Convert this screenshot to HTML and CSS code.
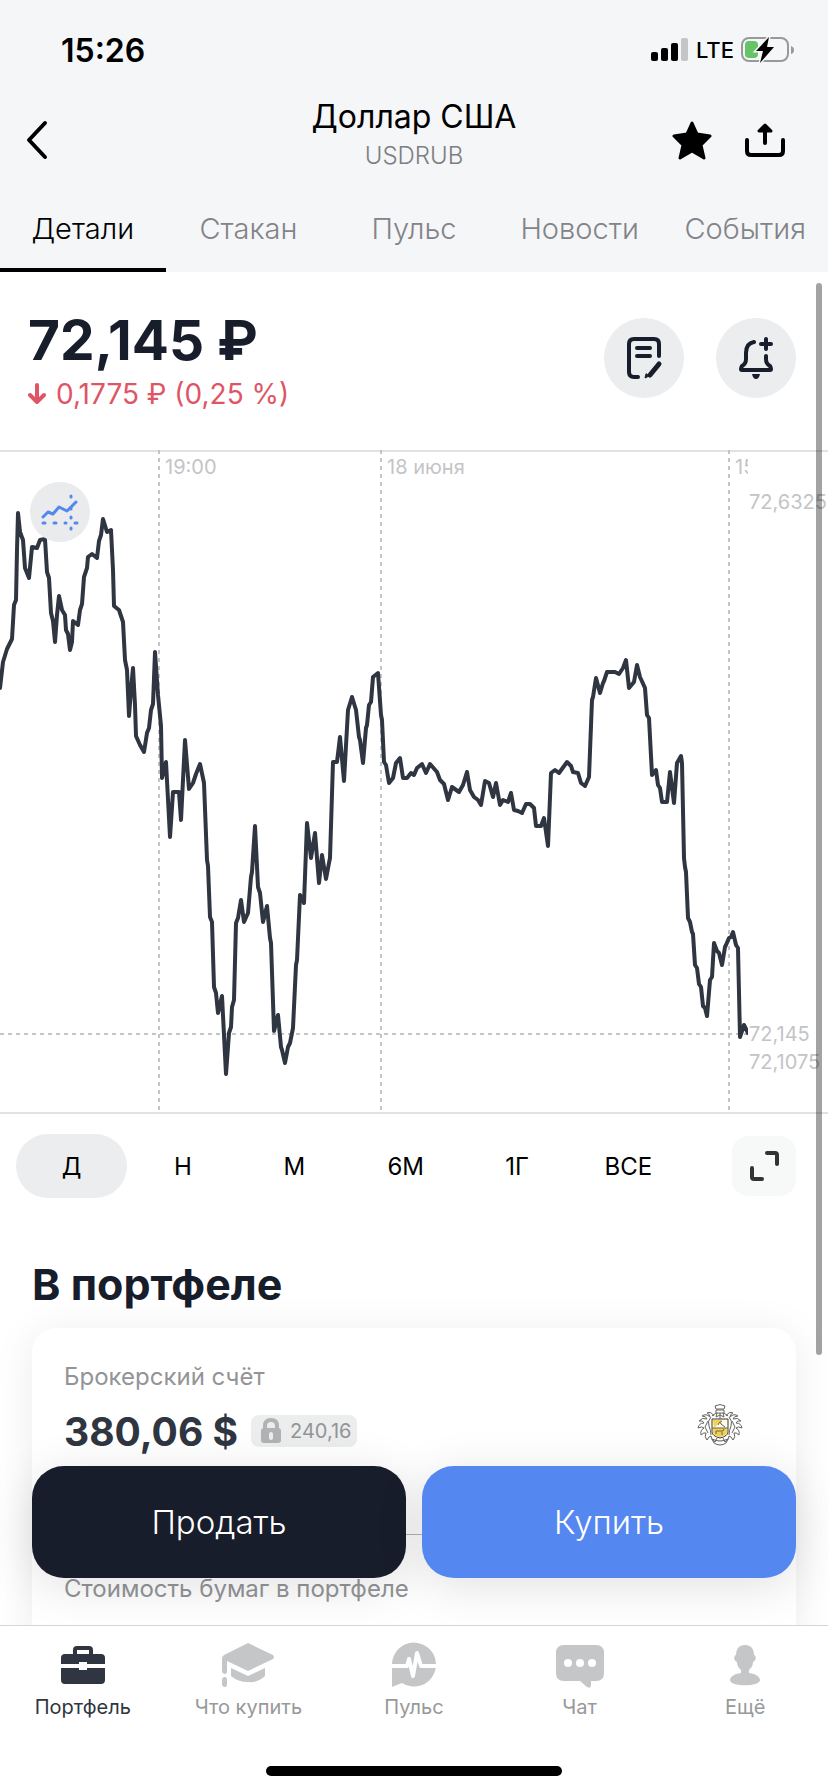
FILE: index.html
```html
<!DOCTYPE html>
<html lang="ru">
<head>
  <meta charset="UTF-8" />
  <meta name="viewport" content="width=device-width, initial-scale=1.0"/>
  <title>Доллар США</title>
  <link rel="stylesheet" href="styles.css">
</head>
<body>
<div class="app">
  <header>
    <div class="status-bar">
      <span class="time">15:26</span>
      <div class="status-icons">
        <svg width="38" height="24" viewBox="0 0 38 24">
          <rect x="0" y="14" width="7" height="9" rx="2"/>
          <rect x="10" y="10" width="7" height="13" rx="2"/>
          <rect x="20" y="5" width="7" height="18" rx="2"/>
          <rect x="30" y="0" width="7" height="23" rx="2" fill="#c4c5c7"/>
        </svg>
        <span class="lte">LTE</span>
        <svg width="54" height="28" viewBox="0 0 54 28">
          <rect x="1" y="2" width="46" height="23" rx="7" fill="none" stroke="#98999b" stroke-width="2"/>
          <path d="M50 10q3 1 3 4t-3 4z" fill="#98999b"/>
          <rect x="4" y="5" width="13" height="17" rx="4" fill="#65c466"/>
          <path d="M28 1L15 15h7l-3 12L33 11h-7z" stroke="#f5f6f8" stroke-width="3"/>
          <path d="M28 1L15 15h7l-3 12L33 11h-7z"/>
        </svg>
      </div>
    </div>

    <div class="title-bar">
      <button class="icon-btn back" aria-label="Назад">
        <svg width="28" height="42" viewBox="0 0 28 42"><path d="M22 4L6 21l16 17" fill="none" stroke="#000" stroke-width="4" stroke-linecap="round" stroke-linejoin="round"/></svg>
      </button>
      <div class="title">
        <h1>Доллар США</h1>
        <p>USDRUB</p>
      </div>
      <div class="title-actions">
        <button class="icon-btn" aria-label="В избранное">
          <svg width="40" height="40" viewBox="0 0 40 40"><path d="M20 3l5 11 13 2-9 9 3 13-12-7-12 7 3-13-9-9 13-2z" stroke="#000" stroke-width="3" stroke-linejoin="round"/></svg>
        </button>
        <button class="icon-btn" aria-label="Поделиться">
          <svg width="42" height="40" viewBox="0 0 42 40"><path d="M3 20v11q0 4 4 4h28q4 0 4-4V20M21 23V9" fill="none" stroke="#000" stroke-width="4" stroke-linecap="round"/><path d="M21 5l-6 6h12z" stroke="#000" stroke-width="3" stroke-linejoin="round"/></svg>
        </button>
      </div>
    </div>

    <nav class="tabs">
      <a href="#details" class="active">Детали</a>
      <a href="#book">Стакан</a>
      <a href="#pulse">Пульс</a>
      <a href="#news">Новости</a>
      <a href="#events">События</a>
    </nav>
  </header>

  <main>
    <section class="price-block">
      <div>
        <div class="price">72,145 ₽</div>
        <div class="change">
          <svg width="18" height="22" viewBox="0 0 18 22"><path d="M9 2v17M2 12l7 7 7-7" fill="none" stroke="#e05566" stroke-width="4" stroke-linecap="round" stroke-linejoin="round"/></svg>
          <span>0,1775 ₽ (0,25 %)</span>
        </div>
      </div>
      <div class="price-actions">
        <button class="round-btn" aria-label="Заявка">
          <svg width="44" height="44" viewBox="0 0 44 44" fill="none" stroke="#171d2b" stroke-width="4" stroke-linecap="round" stroke-linejoin="round">
            <path d="M16 41h-4q-5 0-5-5V8q0-5 5-5h20q5 0 5 5v12M15 12h13M15 20h13"/>
            <path d="M37 28l-9 11" stroke-width="5"/>
            <path d="M24 38l-1 4 4-2z" fill="#171d2b" stroke-width="1"/>
          </svg>
        </button>
        <button class="round-btn" aria-label="Уведомление о цене">
          <svg width="44" height="44" viewBox="0 0 44 44" fill="none" stroke="#171d2b" stroke-width="4" stroke-linecap="round" stroke-linejoin="round">
            <path d="M20 6c-6 1-8 5-8 11v6q0 5-4 7-2 4 0 4h28q2 0 0-4-4-2-4-7v-3"/>
            <path d="M32 3v10M27 8h10" stroke-width="4"/>
            <path d="M18 38h8q-1 5-4 5t-4-5z" fill="#171d2b" stroke="none"/>
          </svg>
        </button>
      </div>
    </section>

    <section class="chart">
      <svg class="chart-svg" viewBox="0 0 828 664">
        <g stroke="#c4c4c6">
          <path d="M0 1H828M0 663H828"/>
          <path d="M159 0V660M381 0V660M729 0V660M0 584H748" fill="none" stroke-width="2" stroke-dasharray="4 4"/>
        </g>
        <g class="chart-labels">
          <text x="165" y="24">19:00</text>
          <text x="387" y="24">18 июня</text>
          <svg width="748" height="40"><text x="735" y="24">15:00</text></svg>
          <text x="749" y="59">72,6325</text>
          <text x="749" y="591">72,145</text>
          <text x="749" y="619">72,1075</text>
        </g>
        <svg width="748" height="664">
          <polyline class="chart-line" points="0,238 3,212 7,199 12,189 14,155 16,150 17,100 18,63 20,82 23,90 25,118 29,128 32,97 37,98 40,90 45,89 47,122 49,128 51,163 53,171 55,192 57,165 59,146 62,160 65,165 66,180 68,184 70,200 72,192 73,171 78,175 80,160 82,154 84,127 87,118 88,107 92,104 97,108 99,91 101,85 103,69 107,82 111,80 113,120 114,156 119,160 123,172 125,210 127,220 129,266 131,240 133,218 135,255 136,286 140,295 144,302 147,283 149,278 151,260 153,254 155,202 158,245 161,276 162,328 166,312 170,387 173,342 179,342 181,370 185,290 189,339 193,333 196,324 200,314 204,333 207,410 208,416 210,467 212,472 214,537 216,543 218,563 222,546 226,624 229,583 231,577 232,557 234,550 236,473 238,468 241,450 244,472 248,463 251,427 252,422 255,376 258,437 260,443 263,472 267,456 270,488 271,493 274,581 278,565 281,597 282,600 285,613 288,597 290,593 292,583 293,578 296,515 297,510 300,445 304,453 307,373 311,408 315,383 319,433 322,405 326,429 329,413 330,408 333,312 337,312 340,287 344,331 348,260 352,247 356,260 359,287 360,290 363,313 366,278 367,275 369,255 371,252 373,227 378,223 381,265 382,270 384,312 386,315 389,333 393,328 396,313 400,308 403,328 407,328 411,323 414,325 417,318 422,314 426,323 430,314 437,322 440,330 444,334 448,350 452,337 459,342 463,335 467,322 470,340 474,347 478,350 481,355 485,331 489,333 493,347 496,333 500,355 503,350 508,352 511,343 514,360 518,361 522,363 526,354 530,354 534,358 536,376 541,376 544,368 548,396 551,323 555,320 559,323 567,312 571,316 573,322 578,323 581,333 585,336 589,327 592,250 593,247 596,228 600,243 603,233 604,231 607,222 615,222 619,224 623,218 626,210 629,238 634,232 637,215 640,227 645,238 647,265 649,268 652,325 656,320 658,335 660,338 662,352 667,352 670,322 674,353 677,313 681,306 682,313 684,408 685,417 686,422 688,468 690,472 692,482 693,484 695,515 697,518 699,534 701,537 703,556 705,558 707,566 710,530 712,527 714,493 717,501 719,503 722,515 725,497 726,495 729,488 731,487 733,482 736,495 738,498 740,587 744,575 748,583"/>
        </svg>
      </svg>
      <button class="chart-mode" aria-label="Вид графика">
        <svg width="40" height="40" viewBox="0 0 40 40" fill="none" stroke="#5587f0" stroke-linecap="round" stroke-linejoin="round">
          <path d="M3 25l5-5 5 2 6-7 8 4 9-9" stroke-width="3"/>
          <path d="M3 31h2M14 31h2M25 31h1M35 31h2M31 4v1M31 16v1M31 25v1M31 36v1" stroke-width="3"/>
        </svg>
      </button>
    </section>

    <div class="periods">
      <div class="period-list">
        <button class="active">Д</button>
        <button>Н</button>
        <button>М</button>
        <button>6М</button>
        <button>1Г</button>
        <button>ВСЕ</button>
      </div>
      <button class="expand" aria-label="На весь экран">
        <svg width="32" height="32" viewBox="0 0 32 32" fill="none" stroke="#333" stroke-width="4" stroke-linecap="round" stroke-linejoin="round"><path d="M19 3h8q2 0 2 2v9M4 18v9q0 2 2 2h8"/></svg>
      </button>
    </div>

    <section class="portfolio">
      <h2>В портфеле</h2>
      <div class="card">
        <p class="label">Брокерский счёт</p>
        <div class="amount-row">
          <span class="amount">380,06 $</span>
          <span class="locked">
            <svg width="20" height="26" viewBox="0 0 20 26"><path d="M4 12V8q0-6 6-6t6 6v4" fill="none" stroke="#b0b2b4" stroke-width="4"/><rect y="10" width="20" height="15" rx="3" fill="#b0b2b4"/><path d="M10 16v4" stroke="#eceded" stroke-width="4" stroke-linecap="round"/></svg>
            240,16
          </span>
          <!-- bank crest -->
          <svg class="crest" width="48" height="44" viewBox="0 0 48 44" fill="none" stroke="#66645e" stroke-width="1">
            <path d="M19 4q5-3 10 0l-1 3h-8zM20 8h8v3h-8zM21 11l-1 4 4-2 4 2-1-4M24 11v6"/>
            <path d="M18 14q-3-5-7-3 3 1 3 4-4-4-8-1 4 0 5 3-5-2-8 2 4-1 5 2-5 0-6 5 4-2 6 0-4 2-3 7 3-3 5-2-2 4 1 7 2-4 4-4 0 4 4 6l2-4"/>
            <path d="M30 14q3-5 7-3-3 1-3 4 4-4 8-1-4 0-5 3 5-2 8 2-4-1-5 2 5 0 6 5-4-2-6 0 4 2 3 7-3-3-5-2 2 4-1 7-2-4-4-4 0 4-4 6l-2-4"/>
            <path d="M15 15q-4 4-2 9t2 9M12 19l-3 6 3 6M33 15q4 4 2 9t-2 9M36 19l3 6-3 6M16 14l4-3M32 14l-4-3"/>
            <path d="M16 17h16v13q0 4-8 6-8-2-8-6z" fill="#fffbe8" stroke="#3d392d"/>
            <path d="M17 18h9l-8 8zM17 26h14v4q0 3-7 5-7-2-7-5z" fill="#f2d34f" stroke="none"/>
            <path d="M16 26h16M22 23q2-5 3-1l4 3M20 32v-3h7l1-2M26 30v3M23 21l3-2"/>
            <path d="M16 37q8 4 16 0l-2 4q-6 4-12 0z"/>
          </svg>
        </div>
        <hr>
        <p class="label">Стоимость бумаг в портфеле</p>
      </div>
    </section>

    <div class="actions">
      <button class="sell">Продать</button>
      <button class="buy">Купить</button>
    </div>
    <div class="scrollbar"></div>
  </main>

  <footer>
    <nav class="bottom-nav">
      <a href="#portfolio" class="active">
        <svg width="56" height="48" viewBox="0 0 56 48"><path d="M6 16q0-4 4-4h36q4 0 4 4v6H32v-2h-8v2H6zM6 26h18v2h8v-2h18v12q0 4-4 4H10q-4 0-4-4z"/><path d="M20 13V8q0-2 2-2h12q2 0 2 2v5" fill="none" stroke="currentColor" stroke-width="4"/></svg>
        Портфель
      </a>
      <a href="#buy">
        <svg width="56" height="48" viewBox="0 0 56 48"><path d="M28 1l25 12q2 2 0 4L28 29 7 19v11q0 2-2 2t-3-2V17q0-3 2-4zM11 26l17 8 17-8v8q-7 7-17 6-10 0-17-6zM2 38q0-3 3-3 2 0 2 3v4q0 3-2 3-3 0-3-3z"/></svg>
        Что купить
      </a>
      <a href="#feed">
        <svg width="56" height="48" viewBox="0 0 56 48"><path d="M6 45V23a22 22 0 1 1 10 18z"/><path d="M4 24h17l2-7 4 17 4-23 4 13h17" fill="none" stroke="#fff" stroke-width="4" stroke-linejoin="round"/></svg>
        Пульс
      </a>
      <a href="#chat">
        <svg width="56" height="48" viewBox="0 0 56 48"><path d="M12 3h32q8 0 8 8v20q0 8-8 8h-5v5q-1 3-4 1l-7-6H12q-8 0-8-8V11q0-8 8-8z"/><g fill="#fff"><circle cx="16" cy="21" r="4"/><circle cx="28" cy="21" r="4"/><circle cx="40" cy="21" r="4"/></g></svg>
        Чат
      </a>
      <a href="#more">
        <svg width="56" height="48" viewBox="0 0 56 48"><path d="M28 3c-6 0-9 4-9 10-3 1-2 6 1 7 0 4 2 6 4 8v3c-7 1-11 4-11 7 0 7 30 7 30 0 0-3-4-6-11-7v-3c2-2 4-4 4-8 3-1 4-6 1-7 0-6-3-10-9-10z"/></svg>
        Ещё
      </a>
    </nav>
    <div class="home-indicator"></div>
  </footer>
</div>
</body>
</html>
```
FILE: styles.css
```css
* {
  box-sizing: border-box;
}

body {
  font-family: Inter, "Liberation Sans", sans-serif;
  margin: 0;
  background-color: #fff;
  color: #171d2b;
}

h1, h2, p {
  margin: 0;
}

button {
  font-family: inherit;
  border: none;
  padding: 0;
  background: none;
  cursor: pointer;
}

a {
  text-decoration: none;
}

svg {
  display: block;
  flex-shrink: 0;
}

.app {
  height: 100vh;
  display: flex;
  flex-direction: column;
}

/* header */
header {
  background-color: #f5f6f8;
}

.status-bar {
  display: flex;
  justify-content: space-between;
  align-items: center;
  height: 100px;
  padding: 0 33px 0 61px;
  color: #000;
}

.time {
  font-size: 32px;
  font-weight: 600;
}

.status-icons {
  display: flex;
  align-items: center;
  gap: 7px;
}

.lte {
  font-size: 22px;
  font-weight: 500;
}

.title-bar {
  display: grid;
  grid-template-columns: 1fr auto 1fr;
  align-items: center;
  height: 80px;
  padding: 0 42px 0 23px;
}

.icon-btn {
  width: max-content;
}

.title {
  text-align: center;
  margin-left: 19px;
  margin-top: -12px;
}

.title h1 {
  font-size: 32px;
  font-weight: 400;
  line-height: 43px;
  color: #000;
}

.title p {
  font-size: 24px;
  font-weight: 300;
  line-height: 36px;
  color: #7d7e82;
}

.title-actions {
  display: flex;
  justify-content: flex-end;
  gap: 32px;
}

.tabs {
  display: grid;
  grid-template-columns: repeat(5, 1fr);
  height: 92px;
}

.tabs a {
  padding-top: 31px;
  font-size: 29px;
  font-weight: 300;
  line-height: 36px;
  text-align: center;
  color: #838488;
}

.tabs a.active {
  color: #000;
  border-bottom: 4px solid #000;
}

/* content */
main {
  position: relative;
  flex: 1;
  min-height: 0;
  overflow: hidden;
}

.price-block {
  display: flex;
  justify-content: space-between;
  height: 178px;
  padding: 36px 32px 0 28px;
}

.price {
  font-size: 55px;
  font-weight: 700;
  line-height: 64px;
}

.change {
  display: flex;
  align-items: center;
  gap: 10px;
  font-size: 28px;
  line-height: 44px;
  color: #e05566;
}

.price-actions {
  display: flex;
  gap: 32px;
  padding-top: 10px;
}

.round-btn {
  display: flex;
  align-items: center;
  justify-content: center;
  width: 80px;
  height: 80px;
  border-radius: 50%;
  background-color: #ebedee;
}

.chart {
  position: relative;
}

.chart-svg {
  width: 100%;
}

.chart-labels {
  font-size: 20px;
  fill: #c4c4c6;
}

.chart-line {
  fill: none;
  stroke: #2f3541;
  stroke-width: 4;
  stroke-linejoin: round;
  stroke-linecap: round;
}

.chart-mode {
  position: absolute;
  left: 30px;
  top: 32px;
  display: flex;
  align-items: center;
  justify-content: center;
  width: 60px;
  height: 60px;
  border-radius: 50%;
  background-color: #e9ebec;
}

.periods {
  display: flex;
  justify-content: space-between;
  align-items: center;
  gap: 48px;
  padding: 20px 32px 0 16px;
}

.period-list {
  display: grid;
  grid-template-columns: repeat(6, 1fr);
  flex: 1;
}

.period-list button {
  height: 64px;
  border-radius: 32px;
  font-size: 24px;
  color: #000;
}

.period-list .active {
  background-color: #ebedee;
}

.expand {
  display: flex;
  align-items: center;
  justify-content: center;
  width: 64px;
  height: 60px;
  border-radius: 16px;
  background-color: #f7f9f9;
}

.portfolio {
  padding: 60px 32px 0;
}

h2 {
  font-size: 43px;
  font-weight: 700;
  line-height: 52px;
}

.card {
  height: 400px;
  margin-top: 18px;
  padding: 33px 32px;
  border-radius: 24px;
  background-color: #fff;
  box-shadow: 0 4px 40px rgba(0, 0, 0, 0.08);
}

.label {
  font-size: 24px;
  line-height: 32px;
  color: #929497;
}

.amount-row {
  display: flex;
  align-items: center;
  height: 76px;
}

.amount {
  font-size: 39px;
  font-weight: 700;
  color: #2f3541;
}

.locked {
  display: flex;
  align-items: center;
  gap: 9px;
  height: 32px;
  margin-left: 13px;
  padding: 0 6px 0 10px;
  border-radius: 8px;
  background-color: #eceded;
  font-size: 20px;
  color: #929497;
}

.crest {
  margin-left: auto;
  margin-right: 20px;
  margin-bottom: 14px;
}

hr {
  height: 1px;
  margin: 65px 0 38px;
  border: none;
  background-color: #b5b5b5;
}

.actions {
  position: absolute;
  left: 32px;
  right: 32px;
  bottom: 47px;
  display: grid;
  grid-template-columns: 1fr 1fr;
  gap: 16px;
}

.actions button {
  height: 112px;
  border-radius: 32px;
  font-size: 33px;
  font-weight: 300;
  color: #fff;
  box-shadow: 0 8px 48px rgba(0, 0, 0, 0.12);
}

.actions .sell {
  background-color: #171d2a;
}

.actions .buy {
  background-color: #5587f0;
}

.scrollbar {
  position: absolute;
  top: 11px;
  right: 6px;
  width: 6px;
  height: 1072px;
  border-radius: 3px;
  background-color: rgba(0, 0, 0, 0.36);
}

/* bottom menu */
footer {
  border-top: 1px solid #d5d6d7;
  background-color: #fff;
}

.bottom-nav {
  display: grid;
  grid-template-columns: repeat(5, 1fr);
  padding-top: 16px;
}

.bottom-nav a {
  display: flex;
  flex-direction: column;
  align-items: center;
  gap: 4px;
  font-size: 20px;
  line-height: 26px;
  color: #97999b;
}

.bottom-nav svg {
  fill: #c4c6c8;
}

.bottom-nav .active,
.bottom-nav .active svg {
  color: #2f3541;
  fill: #2f3541;
}

.home-indicator {
  width: 296px;
  height: 10px;
  margin: 46px auto 16px;
  border-radius: 5px;
  background-color: #000;
}
```
